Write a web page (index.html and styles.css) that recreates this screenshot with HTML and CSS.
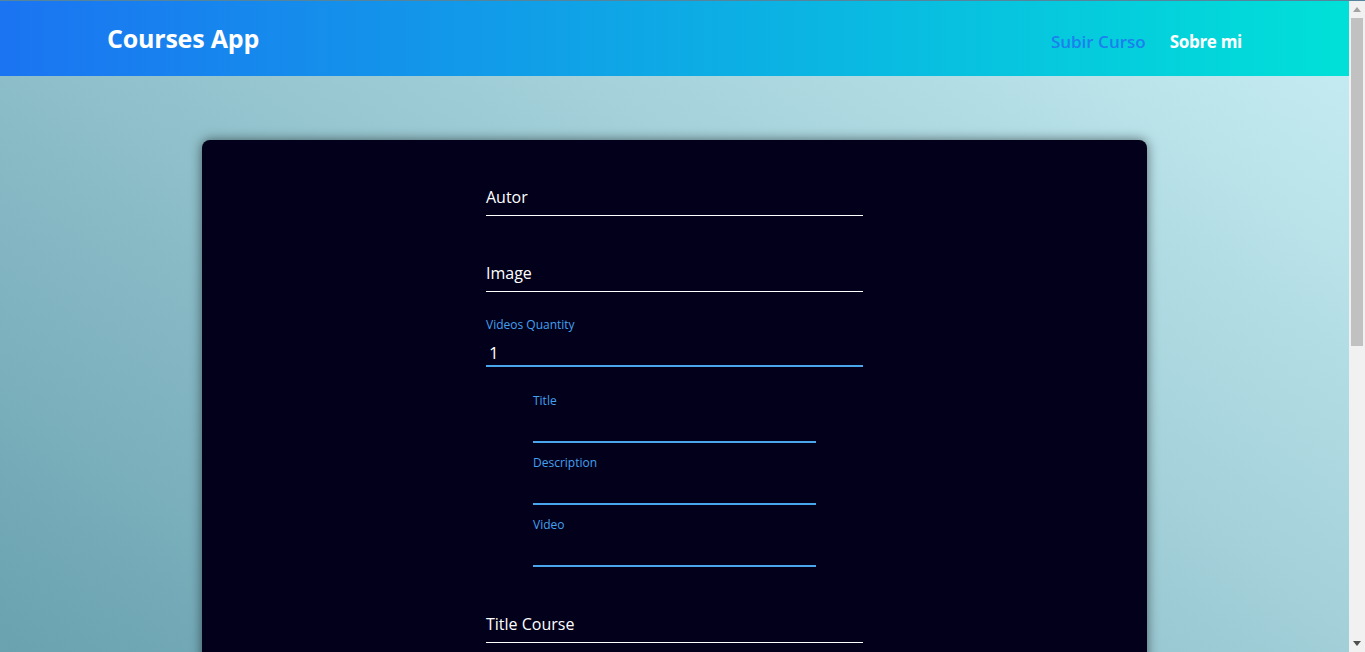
FILE: index.html
```html
<!DOCTYPE html>
<html lang="es">
<head>
<meta charset="utf-8">
<title>Courses App</title>
<link rel="stylesheet" href="styles.css">
</head>
<body>
<div class="app">
  <header class="topbar">
    <a class="brand" href="#">Courses App</a>
    <nav class="nav">
      <a class="nav-link nav-link--active" href="#">Subir Curso</a>
      <a class="nav-link" href="#">Sobre mi</a>
    </nav>
  </header>
  <main class="page">
    <section class="card">
      <form class="form">
        <div class="field"><span class="field-text">Autor</span></div>
        <div class="field field--gap"><span class="field-text">Image</span></div>
        <div class="qty">
          <span class="field-label">Videos Quantity</span>
          <span class="qty-value">1</span>
        </div>
        <div class="videos">
          <div class="subfield"><span class="field-label">Title</span><span class="subfield-input"></span></div>
          <div class="subfield"><span class="field-label">Description</span><span class="subfield-input"></span></div>
          <div class="subfield"><span class="field-label">Video</span><span class="subfield-input"></span></div>
        </div>
        <div class="field field--gap"><span class="field-text">Title Course</span></div>
      </form>
    </section>
  </main>
</div>
<div class="scrollbar" aria-hidden="true">
  <span class="sb-arrow"><svg width="8" height="5" viewBox="0 0 8 5"><path d="M0 5 L4 0 L8 5 Z" fill="#a3a3a3"/></svg></span>
  <span class="sb-thumb"></span>
  <span class="sb-track"></span>
  <span class="sb-arrow"><svg width="8" height="5" viewBox="0 0 8 5"><path d="M0 0 L8 0 L4 5 Z" fill="#505050"/></svg></span>
</div>
</body>
</html>
```
FILE: styles.css
```css
html, body {
  margin: 0;
  padding: 0;
}
body {
  font-family: "Open Sans", "Noto Sans", sans-serif;
  color: #fff;
  height: 100vh;
  box-sizing: border-box;
  border-top: 1px solid #55849c;
  display: flex;
  overflow: hidden;
}
.app {
  flex: 1;
  min-width: 0;
  overflow: hidden;
  background: linear-gradient(35deg, #6aa2b0 0%, #c8eef4 100%);
}
.topbar {
  height: 75px;
  display: flex;
  align-items: center;
  justify-content: space-between;
  padding: 0 107px;
  background: linear-gradient(to right, #1b74f2, #00e0d8);
}
.brand {
  color: #fff;
  text-decoration: none;
  font-weight: 700;
  font-size: 25px;
  letter-spacing: -0.2px;
  margin-top: -1px;
}
.nav {
  display: flex;
  gap: 24px;
  padding-top: 6px;
}
.nav-link {
  color: #fff;
  text-decoration: none;
  font-weight: 700;
  font-size: 17px;
  letter-spacing: -0.3px;
}
.nav-link--active {
  color: #1b80ee;
  font-weight: 600;
  letter-spacing: 0;
}
.page {
  padding-top: 64px;
  display: flex;
  justify-content: center;
}
.card {
  width: 70%;
  background: #02001a;
  border-radius: 8px;
  box-shadow: 0 0 12px rgba(0, 0, 0, 0.55);
  padding: 41px 0 120px;
  display: flex;
  justify-content: center;
}
.form {
  width: 377px;
  display: flex;
  flex-direction: column;
}
.field {
  padding: 4px 0 6px;
  border-bottom: 1px solid #fff;
  display: flex;
  flex-direction: column;
}
.field--gap {
  margin-top: 41px;
}
.field-text {
  font-size: 16px;
  line-height: 24px;
  height: 24px;
}
.qty {
  margin-top: 25px;
  display: flex;
  flex-direction: column;
  border-bottom: 2px solid #4aa6ec;
}
.field-label {
  font-size: 12px;
  line-height: 16px;
  height: 16px;
  color: #42a0f0;
}
.qty-value {
  margin-top: 8px;
  font-size: 17px;
  line-height: 24px;
  height: 24px;
  padding-left: 3px;
}
.videos {
  margin: 26px 0 0 47px;
  width: 283px;
  display: flex;
  flex-direction: column;
  gap: 12px;
}
.subfield {
  display: flex;
  flex-direction: column;
}
.subfield-input {
  height: 32px;
  border-bottom: 2px solid #4aa6ec;
}
.scrollbar {
  width: 16px;
  flex: none;
  background: #f1f1f1;
  display: flex;
  flex-direction: column;
  align-items: center;
}
.sb-arrow {
  height: 17px;
  width: 16px;
  display: flex;
  align-items: center;
  justify-content: center;
}
.sb-thumb {
  width: 12px;
  height: 328px;
  background: #c1c1c1;
}
.sb-track {
  flex: 1;
}
```
